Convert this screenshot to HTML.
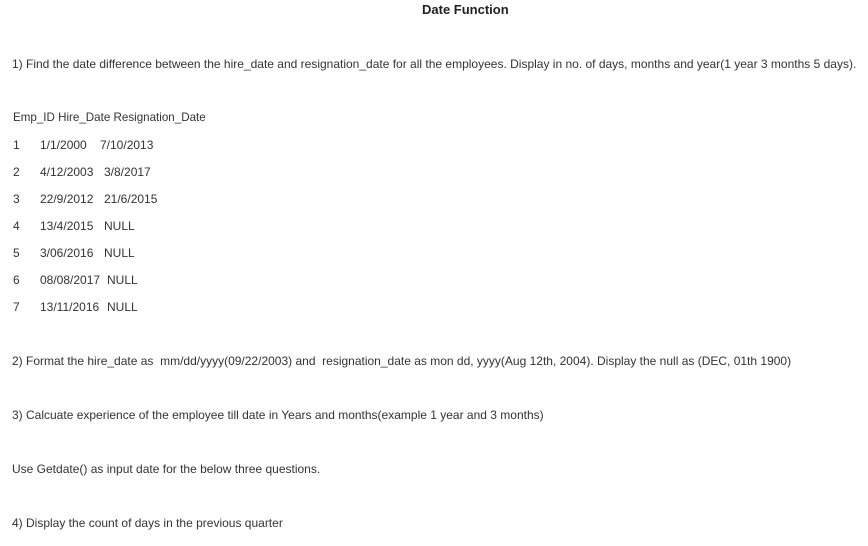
<!DOCTYPE html>
<html><head><meta charset="utf-8"><style>
body{margin:0;width:868px;height:546px;background:#fff;font-family:"Liberation Sans",sans-serif;color:#333;font-size:12px;position:relative;overflow:hidden}
.t{position:absolute;white-space:nowrap;line-height:14px}
</style></head><body>
<div class="t" style="left:422px;top:3px;font-size:13px;font-weight:bold;color:#222">Date Function</div>
<div class="t" style="left:12px;top:57px">1) Find the date difference between the hire_date and resignation_date for all the employees. Display in no. of days, months and year(1 year 3 months 5 days).</div>
<div class="t" style="left:13px;top:111px;font-size:11.6px">Emp_ID Hire_Date Resignation_Date</div>
<div class="t" style="left:13px;top:138px">1</div><div class="t" style="left:40px;top:138px">1/1/2000</div><div class="t" style="left:100px;top:138px">7/10/2013</div>
<div class="t" style="left:13px;top:165px">2</div><div class="t" style="left:40px;top:165px">4/12/2003</div><div class="t" style="left:104px;top:165px">3/8/2017</div>
<div class="t" style="left:13px;top:192px">3</div><div class="t" style="left:40px;top:192px">22/9/2012</div><div class="t" style="left:104px;top:192px">21/6/2015</div>
<div class="t" style="left:13px;top:219px">4</div><div class="t" style="left:40px;top:219px">13/4/2015</div><div class="t" style="left:104px;top:219px">NULL</div>
<div class="t" style="left:13px;top:246px">5</div><div class="t" style="left:40px;top:246px">3/06/2016</div><div class="t" style="left:104px;top:246px">NULL</div>
<div class="t" style="left:13px;top:273px">6</div><div class="t" style="left:40px;top:273px">08/08/2017</div><div class="t" style="left:107px;top:273px">NULL</div>
<div class="t" style="left:13px;top:300px">7</div><div class="t" style="left:40px;top:300px">13/11/2016</div><div class="t" style="left:107px;top:300px">NULL</div>
<div class="t" style="left:12px;top:354px">2) Format the hire_date as&nbsp; mm/dd/yyyy(09/22/2003) and&nbsp; resignation_date as mon dd, yyyy(Aug 12th, 2004). Display the null as (DEC, 01th 1900)</div>
<div class="t" style="left:12px;top:408px">3) Calcuate experience of the employee till date in Years and months(example 1 year and 3 months)</div>
<div class="t" style="left:12px;top:462px">Use Getdate() as input date for the below three questions.</div>
<div class="t" style="left:12px;top:516px">4) Display the count of days in the previous quarter</div>
</body></html>
